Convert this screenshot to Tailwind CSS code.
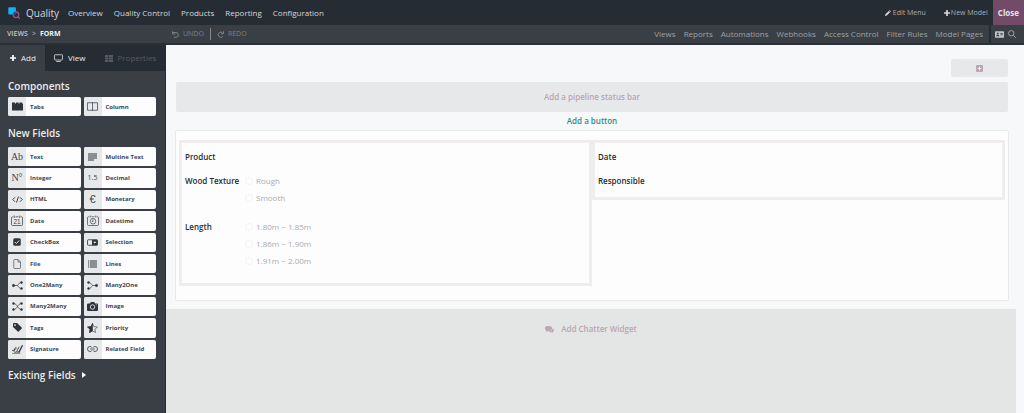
<!DOCTYPE html>
<html lang="en">
<head>
  <meta charset="UTF-8">
  <meta name="viewport" content="width=device-width, initial-scale=1.0">
  <title>Quality - Studio</title>
  <script src="https://cdn.jsdelivr.net/npm/@tailwindcss/browser@4"></script>
</head>
<body class="min-h-screen flex flex-col bg-[#f7f8fa] font-['Open_Sans','Noto_Sans',sans-serif] text-[8px] leading-3 text-[#262c33]">

  <!-- Top bar -->
  <header class="h-[25px] shrink-0 flex items-center bg-[#262c33] text-[#d5d7da]">
    <a href="#" class="flex items-center gap-[6px] pl-2 text-[10px] leading-4">
      <svg class="size-3" viewBox="0 0 12 12" fill="none">
        <rect x="0.3" y="0.2" width="7.6" height="7.4" rx="0.8" fill="#07b6f5"/>
        <circle cx="8" cy="7.8" r="2.8" stroke="#985184" stroke-width="1.3"/>
        <path d="M7.9 5v2.6H5.2A2.8 2.8 0 0 1 7.9 5z" fill="#144496"/>
        <path d="M9.8 9.6l2 2.1" stroke="#985184" stroke-width="1.4"/>
      </svg>
      Quality
    </a>
    <nav class="flex gap-[11px] pl-[9px]">
      <a href="#">Overview</a>
      <a href="#">Quality Control</a>
      <a href="#">Products</a>
      <a href="#">Reporting</a>
      <a href="#">Configuration</a>
    </nav>
    <div class="ml-auto flex items-center self-stretch text-[7px] text-[#a9adb2]">
      <button class="flex items-center gap-[2px] mr-[18px]">
        <svg class="size-[6px]" viewBox="0 0 12 12" fill="#d5d7da"><path d="M0 12l.8-3.6L7.4 1.8 10.2 4.6 3.6 11.2zM8.2 1L9.2 0 12 2.8 11 3.8z"/></svg>
        Edit Menu
      </button>
      <button class="flex items-center gap-px mr-[5px]">
        <svg class="size-[6px]" viewBox="0 0 12 12" fill="#d5d7da"><path d="M4.3 0h3.4v4.3H12v3.4H7.7V12H4.3V7.7H0V4.3h4.3z"/></svg>
        New Model
      </button>
      <button class="self-stretch px-[5px] bg-[#714b67] text-[8px] font-bold text-[#e8e1e6]">Close</button>
    </div>
  </header>

  <!-- Studio bar -->
  <div class="h-5 shrink-0 flex items-stretch border-b-2 border-[#2b3038] bg-[#3a3f46] text-[#9da1a6]">
    <div class="w-[166px] pl-[7px] flex items-center gap-1 text-[7px] font-semibold">
      <a href="#" class="text-[#c3c6c9]">VIEWS</a>
      <span>&gt;</span>
      <span class="font-bold text-[#f0f1f2]">FORM</span>
    </div>
    <div class="flex items-center pl-[6px] text-[7px] font-medium text-[#7b8085]">
      <button class="flex items-center gap-1 pr-[6px]">
        <svg class="size-[7px]" viewBox="0 0 14 14" fill="none" stroke="currentColor" stroke-width="2"><path d="M2 3h6a4.5 4.5 0 0 1 0 9.5H3.5"/><path d="M1 0.5v5.5h5.5"/></svg>
        UNDO
      </button>
      <button class="flex items-center gap-1 border-l border-[#85898e] pl-[6px]">
        <svg class="size-[7px]" viewBox="0 0 14 14" fill="none" stroke="currentColor" stroke-width="2"><path d="M11.5 4a5.2 5.2 0 1 0 .3 6.5"/><path d="M13 0.5v5H8"/></svg>
        REDO
      </button>
    </div>
    <nav class="ml-auto flex items-center gap-[8px] pr-[6px] border-r-2 border-[#262c33]">
      <a href="#">Views</a>
      <a href="#">Reports</a>
      <a href="#">Automations</a>
      <a href="#">Webhooks</a>
      <a href="#">Access Control</a>
      <a href="#">Filter Rules</a>
      <a href="#">Model Pages</a>
    </nav>
    <div class="flex items-center gap-1 pl-[4px] pr-2">
      <button aria-label="Preview">
        <svg class="w-[9px] h-[7px]" viewBox="0 0 18 14"><rect y="0.5" width="18" height="13" rx="1.5" fill="#c3c6c9"/><circle cx="5.5" cy="5" r="1.9" fill="#3a3f46"/><path d="M2.3 10.5c0-4 6.4-4 6.4 0zM10.5 4h5.3v1.5h-5.3zM10.5 7h5.3v1.5h-5.3z" fill="#3a3f46"/></svg>
      </button>
      <button aria-label="Search">
        <svg class="size-[8px]" viewBox="0 0 16 16" fill="none" stroke="#a9adb2" stroke-width="1.8"><circle cx="6.5" cy="6.5" r="5.4"/><path d="M10.5 10.5l5 5"/></svg>
      </button>
    </div>
  </div>

  <div class="flex-1 flex">
    <!-- Sidebar -->
    <aside class="w-[166px] shrink-0 border-r border-[#262c33] bg-[#3a3f46] text-[#eceded]">
      <div class="h-[26px] flex items-stretch bg-[#262c33]">
        <button class="w-[45px] flex items-center gap-[5px] pl-[10px] bg-[#3a3f46]">
          <svg class="size-[6px]" viewBox="0 0 12 12" fill="#fff"><path d="M4.3 0h3.4v4.3H12v3.4H7.7V12H4.3V7.7H0V4.3h4.3z"/></svg>
          Add
        </button>
        <button class="flex items-center gap-[5px] pl-[9px]">
          <svg class="w-[9px] h-[8px]" viewBox="0 0 18 16" fill="none" stroke="#d5d7da" stroke-width="1.7"><rect x="1" y="1.5" width="16" height="10.5" rx="1.2"/><path d="M4.5 15h9"/></svg>
          View
        </button>
        <button class="flex items-center gap-1 pl-5 text-[#565b62]" disabled>
          <svg class="w-[8px] h-[7px]" viewBox="0 0 16 14" fill="currentColor"><path d="M0 0h6v3.8H0zM7.2 0H16v3.8H7.2zM0 5h6v3.8H0zM7.2 5H16v3.8H7.2zM0 10h6v3.8H0zM7.2 10H16v3.8H7.2z"/></svg>
          Properties
        </button>
      </div>

      <div class="pl-2 pr-[9px]">
        <h2 class="pt-[7px] text-[10px] leading-4 font-semibold">Components</h2>
        <div class="mt-[3px] h-[19px] grid grid-cols-2 gap-x-[3px] text-[6px] leading-3 font-bold text-[#3f4452]">
          <button class="flex items-stretch rounded-xs overflow-hidden bg-[#fdfdfd] text-left">
            <span class="w-[18px] flex items-center justify-center bg-[#e7e8ea]">
              <svg class="w-[11px] h-[9px]" viewBox="0 0 22 18" fill="#2f343b"><path d="M0 1h6v2h2V1h5v2h2V1h5v2h2v14H0z"/></svg>
            </span>
            <span class="self-center pl-1">Tabs</span>
          </button>
          <button class="flex items-stretch rounded-xs overflow-hidden bg-[#fdfdfd] text-left">
            <span class="w-[18px] flex items-center justify-center bg-[#e7e8ea]">
              <svg class="w-[11px] h-[9px]" viewBox="0 0 22 18" fill="none" stroke="#3f4452" stroke-width="1.5"><path d="M1 1.5h20v15H1zM11 0v18"/></svg>
            </span>
            <span class="self-center pl-1">Column</span>
          </button>
        </div>

        <h2 class="pt-[9px] text-[10px] leading-4 font-semibold">New Fields</h2>
        <div class="mt-[6px] h-[212px] grid grid-cols-2 grid-rows-10 gap-x-[3px] gap-y-[2px] text-[6px] leading-3 font-bold text-[#3f4452]">
          <button class="flex items-stretch rounded-xs overflow-hidden bg-[#fdfdfd] text-left">
            <span class="w-[18px] flex items-center justify-center bg-[#e7e8ea] font-['Liberation_Serif',serif] text-[10px] font-normal">Ab</span>
            <span class="self-center pl-1">Text</span>
          </button>
          <button class="flex items-stretch rounded-xs overflow-hidden bg-[#fdfdfd] text-left">
            <span class="w-[18px] flex items-center justify-center bg-[#e7e8ea]">
              <svg class="w-[9px] h-[8px]" viewBox="0 0 18 16" fill="none" stroke="#2f343b" stroke-width="2"><path d="M0 2h18M0 6h18M0 10h18M0 14h12"/></svg>
            </span>
            <span class="self-center pl-1">Multine Text</span>
          </button>

          <button class="flex items-stretch rounded-xs overflow-hidden bg-[#fdfdfd] text-left">
            <span class="w-[18px] flex items-center justify-center bg-[#e7e8ea] font-['Liberation_Serif',serif] text-[10px] font-normal">N°</span>
            <span class="self-center pl-1">Integer</span>
          </button>
          <button class="flex items-stretch rounded-xs overflow-hidden bg-[#fdfdfd] text-left">
            <span class="w-[18px] flex items-center justify-center bg-[#e7e8ea] text-[7px] font-normal">1.5</span>
            <span class="self-center pl-1">Decimal</span>
          </button>

          <button class="flex items-stretch rounded-xs overflow-hidden bg-[#fdfdfd] text-left">
            <span class="w-[18px] flex items-center justify-center bg-[#e7e8ea]">
              <svg class="w-[11px] h-[7px]" viewBox="0 0 22 14" fill="none" stroke="#3f4452" stroke-width="2"><path d="M6 2.500L1.500 7 6 11.500M16 2.500L20.500 7 16 11.500M13 1L9 13"/></svg>
            </span>
            <span class="self-center pl-1">HTML</span>
          </button>
          <button class="flex items-stretch rounded-xs overflow-hidden bg-[#fdfdfd] text-left">
            <span class="w-[18px] flex items-center justify-center bg-[#e7e8ea] font-['Liberation_Sans',sans-serif] text-[11px] font-normal">€</span>
            <span class="self-center pl-1">Monetary</span>
          </button>

          <button class="flex items-stretch rounded-xs overflow-hidden bg-[#fdfdfd] text-left">
            <span class="w-[18px] flex items-center justify-center bg-[#e7e8ea]">
              <svg class="w-[12px] h-[11px]" viewBox="0 0 24 22" fill="none" stroke="#3f4452" stroke-width="1.5"><path d="M4.500 3.500H3q-2 0-2 2V19q0 2 2 2h18q2 0 2-2V5.500q0-2-2-2h-1.500M9 3.500h6M6.500 1v5M17.500 1v5"/><text x="12" y="17.500" text-anchor="middle" font-family="Liberation Sans, sans-serif" font-size="13" font-weight="400" fill="#3f4452" stroke="none">21</text></svg>
            </span>
            <span class="self-center pl-1">Date</span>
          </button>
          <button class="flex items-stretch rounded-xs overflow-hidden bg-[#fdfdfd] text-left">
            <span class="w-[18px] flex items-center justify-center bg-[#e7e8ea]">
              <svg class="w-[12px] h-[11px]" viewBox="0 0 24 22" fill="none" stroke="#3f4452" stroke-width="1.4"><path d="M4.500 3.500H3q-2 0-2 2V19q0 2 2 2h18q2 0 2-2V5.500q0-2-2-2h-1.500M9 3.500h6M6.500 1v4M17.500 1v4"/><circle cx="12" cy="12.500" r="5.500"/><path d="M12 9v4H9.500"/></svg>
            </span>
            <span class="self-center pl-1">Datetime</span>
          </button>

          <button class="flex items-stretch rounded-xs overflow-hidden bg-[#fdfdfd] text-left">
            <span class="w-[18px] flex items-center justify-center bg-[#e7e8ea]">
              <svg class="size-[8px]" viewBox="0 0 16 16" fill="none"><rect x="0.5" y="0.5" width="15" height="15" rx="3" fill="#2f343b"/><path d="M3.8 8l3 3 5.6-6" stroke="#e7e8ea" stroke-width="2"/></svg>
            </span>
            <span class="self-center pl-1">CheckBox</span>
          </button>
          <button class="flex items-stretch rounded-xs overflow-hidden bg-[#fdfdfd] text-left">
            <span class="w-[18px] flex items-center justify-center bg-[#e7e8ea]">
              <svg class="w-[11px] h-[7px]" viewBox="0 0 22 14" fill="none"><rect x="1" y="1.5" width="20" height="11" rx="1.5" stroke="#2f343b" stroke-width="1.6"/><path d="M10 1.5h11v11H10z" fill="#2f343b"/><path d="M12.5 5.5h6L15.500 9z" fill="#fff"/></svg>
            </span>
            <span class="self-center pl-1">Selection</span>
          </button>

          <button class="flex items-stretch rounded-xs overflow-hidden bg-[#fdfdfd] text-left">
            <span class="w-[18px] flex items-center justify-center bg-[#e7e8ea]">
              <svg class="w-[8px] h-[10px]" viewBox="0 0 16 20" fill="none" stroke="#3f4452" stroke-width="1.3"><path d="M3 1h7l5 5v11.5a1.5 1.5 0 0 1-1.5 1.5H3a1.5 1.5 0 0 1-1.5-1.5V2.5A1.5 1.5 0 0 1 3 1zM10 1v5h5"/></svg>
            </span>
            <span class="self-center pl-1">File</span>
          </button>
          <button class="flex items-stretch rounded-xs overflow-hidden bg-[#fdfdfd] text-left">
            <span class="w-[18px] flex items-center justify-center bg-[#e7e8ea]">
              <svg class="w-[9px] h-[8px]" viewBox="0 0 18 16" fill="none" stroke="#2f343b" stroke-width="2"><path d="M0 2h2.500M4 2h14M0 6h2.500M4 6h14M0 10h2.500M4 10h14M0 14h2.500M4 14h14"/></svg>
            </span>
            <span class="self-center pl-1">Lines</span>
          </button>

          <button class="flex items-stretch rounded-xs overflow-hidden bg-[#fdfdfd] text-left">
            <span class="w-[18px] flex items-center justify-center bg-[#e7e8ea]">
              <svg class="w-[11px] h-[9px]" viewBox="0 0 22 18" fill="#2f343b" stroke="#2f343b"><path d="M2.5 9h8M19 3c-4 0-5 2-8 6 3 4 4 6 8 6" fill="none" stroke-width="1.4"/><circle cx="3" cy="9" r="2.400"/><circle cx="19" cy="3" r="2"/><circle cx="19" cy="15" r="2"/></svg>
            </span>
            <span class="self-center pl-1">One2Many</span>
          </button>
          <button class="flex items-stretch rounded-xs overflow-hidden bg-[#fdfdfd] text-left">
            <span class="w-[18px] flex items-center justify-center bg-[#e7e8ea]">
              <svg class="w-[11px] h-[9px]" viewBox="0 0 22 18" fill="#2f343b" stroke="#2f343b"><path d="M19.5 9h-8M3 3c4 0 5 2 8 6-3 4-4 6-8 6" fill="none" stroke-width="1.4"/><circle cx="19" cy="9" r="2.400"/><circle cx="3" cy="3" r="2"/><circle cx="3" cy="15" r="2"/></svg>
            </span>
            <span class="self-center pl-1">Many2One</span>
          </button>

          <button class="flex items-stretch rounded-xs overflow-hidden bg-[#fdfdfd] text-left">
            <span class="w-[18px] flex items-center justify-center bg-[#e7e8ea]">
              <svg class="w-[11px] h-[9px]" viewBox="0 0 22 18" fill="#2f343b" stroke="#2f343b"><path d="M3 3c4 0 5 2 8 6-3 4-4 6-8 6M19 3c-4 0-5 2-8 6 3 4 4 6 8 6" fill="none" stroke-width="1.4"/><circle cx="3" cy="3" r="2"/><circle cx="3" cy="15" r="2"/><circle cx="19" cy="3" r="2"/><circle cx="19" cy="15" r="2"/></svg>
            </span>
            <span class="self-center pl-1">Many2Many</span>
          </button>
          <button class="flex items-stretch rounded-xs overflow-hidden bg-[#fdfdfd] text-left">
            <span class="w-[18px] flex items-center justify-center bg-[#e7e8ea]">
              <svg class="w-[11px] h-[9px]" viewBox="0 0 22 18" fill="#2f343b"><path d="M2 3h4l1.5-3h7L16 3h4q2 0 2 2v11q0 2-2 2H2q-2 0-2-2V5q0-2 2-2z"/><circle cx="11" cy="10" r="4.5" fill="none" stroke="#e7e8ea" stroke-width="1.7"/><path d="M17.5 5h2v1.5h-2z" fill="#e7e8ea"/></svg>
            </span>
            <span class="self-center pl-1">Image</span>
          </button>

          <button class="flex items-stretch rounded-xs overflow-hidden bg-[#fdfdfd] text-left">
            <span class="w-[18px] flex items-center justify-center bg-[#e7e8ea]">
              <svg class="size-[9px]" viewBox="0 0 18 18" fill="#2f343b"><path fill-rule="evenodd" d="M0 1.5Q0 0 1.5 0H8l9.5 9q.8 1 0 2l-6 6.2q-1 .8-2 0L0 8zM4 2.4a1.6 1.6 0 1 0 .01 0z"/></svg>
            </span>
            <span class="self-center pl-1">Tags</span>
          </button>
          <button class="flex items-stretch rounded-xs overflow-hidden bg-[#fdfdfd] text-left">
            <span class="w-[18px] flex items-center justify-center bg-[#e7e8ea]">
              <svg class="w-[11px] h-[10px]" viewBox="0 0 22 20" fill="none" stroke="#2f343b" stroke-width="1.2"><path d="M11 1l2.8 6.2 7 .9-5 4.4 1.2 6.5L11 15.8l-6 3.2 1.2-6.5-5-4.4 7-.9z"/><path d="M11 1v14.8l-6 3.2 1.2-6.5-5-4.4 7-.9z" fill="#2f343b"/></svg>
            </span>
            <span class="self-center pl-1">Priority</span>
          </button>

          <button class="flex items-stretch rounded-xs overflow-hidden bg-[#fdfdfd] text-left">
            <span class="w-[18px] flex items-center justify-center bg-[#e7e8ea]">
              <svg class="w-[11px] h-[9px]" viewBox="0 0 22 18" fill="none" stroke="#2f343b" stroke-width="1.6" stroke-linecap="round" stroke-linejoin="round"><path d="M1 11c4 0 8-3 7.500-5.500S4 8 4 13q0 3.500 5 1"/><path d="M14 4l-4 8q-1.500 4.500 3 2"/><path d="M20.500 1.500L14 14.500" stroke-width="2.600"/><path d="M1 17h15" stroke-width="1"/></svg>
            </span>
            <span class="self-center pl-1">Signature</span>
          </button>
          <button class="flex items-stretch rounded-xs overflow-hidden bg-[#fdfdfd] text-left">
            <span class="w-[18px] flex items-center justify-center bg-[#e7e8ea]">
              <svg class="w-[11px] h-[6px]" viewBox="0 0 22 12" fill="none" stroke="#3f4452" stroke-width="1.7"><path d="M9.500 9.500A5 5 0 0 1 6 11a5 5 0 0 1 0-10c2 0 3.500 1 4.300 2.500M12.500 2.500A5 5 0 0 1 16 1a5 5 0 0 1 0 10c-2 0-3.500-1-4.300-2.500M6.500 6h9"/></svg>
            </span>
            <span class="self-center pl-1">Related Field</span>
          </button>
        </div>

        <button class="mt-2 flex items-center gap-[6px] text-[10px] leading-4 font-semibold">
          Existing Fields
          <svg class="w-[4px] h-[6px]" viewBox="0 0 4 6" fill="#fff"><path d="M0 0l4 3-4 3z"/></svg>
        </button>
      </div>
    </aside>

    <!-- Form editor -->
    <main class="flex-1 flex flex-col">
      <div class="pl-[9px] pr-[15px] pt-[14px]">
        <div class="flex justify-end pr-px">
          <button class="w-[57px] h-[18px] flex items-center justify-center rounded-xs bg-[#e7e8ea]" aria-label="Add a smart button">
            <svg class="size-[7px]" viewBox="0 0 14 14"><rect width="14" height="14" rx="2.5" fill="#b9a5b3"/><path d="M7 3v8M3 7h8" stroke="#f0ecef" stroke-width="2"/></svg>
          </button>
        </div>
        <div class="mt-[5px] px-px">
          <button class="w-full h-[30px] rounded-xs bg-[#e7e8ea] font-semibold text-[#b9a5b3]">Add a pipeline status bar</button>
        </div>
        <button class="w-full h-[18px] block font-semibold text-[#1f8d92]">Add a button</button>

        <!-- Sheet -->
        <div class="h-[171px] px-[3px] pt-[9px] flex items-start rounded-xs border border-[#e7e8ea] bg-[#fdfdfd]">
          <section class="flex-1 h-[146px] pl-[3px] pt-[8px] border-3 border-[#efedee]">
            <h3 class="font-semibold">Product</h3>
            <fieldset class="mt-[9px] flex text-[#a9abaf]">
              <legend class="float-left w-[60px] pt-[3px] font-semibold text-[#262c33]">Wood Texture</legend>
              <div>
                <label class="h-[17px] flex items-center gap-[3px]"><input type="radio" name="texture" class="appearance-none size-2 rounded-full border border-[#f4f4f5]">Rough</label>
                <label class="h-[17px] flex items-center gap-[3px]"><input type="radio" name="texture" class="appearance-none size-2 rounded-full border border-[#f4f4f5]">Smooth</label>
              </div>
            </fieldset>
            <fieldset class="mt-3 flex text-[#a9abaf]">
              <legend class="float-left w-[60px] pt-[3px] font-semibold text-[#262c33]">Length</legend>
              <div>
                <label class="h-[17px] flex items-center gap-[3px]"><input type="radio" name="length" class="appearance-none size-2 rounded-full border border-[#f4f4f5]">1.80m ~ 1.85m</label>
                <label class="h-[17px] flex items-center gap-[3px]"><input type="radio" name="length" class="appearance-none size-2 rounded-full border border-[#f4f4f5]">1.86m ~ 1.90m</label>
                <label class="h-[17px] flex items-center gap-[3px]"><input type="radio" name="length" class="appearance-none size-2 rounded-full border border-[#f4f4f5]">1.91m ~ 2.00m</label>
              </div>
            </fieldset>
          </section>
          <section class="flex-1 h-[60px] pl-[3px] pt-[8px] border-3 border-[#efedee]">
            <h3 class="font-semibold">Date</h3>
            <h3 class="mt-3 font-semibold">Responsible</h3>
          </section>
        </div>
      </div>

      <!-- Chatter -->
      <div class="flex-1 mt-2 mr-[8px] pt-[14px] flex items-start justify-center bg-[#e4e6e5]">
        <button class="flex items-center gap-[7px] font-semibold text-[#b9a5b3]">
          <svg class="w-[9px] h-[7px]" viewBox="0 0 18 14" fill="currentColor"><ellipse cx="7" cy="5" rx="7" ry="4.8"/><path d="M2 12l1.5-4 4 1.5z"/><path d="M15.5 4.5C15.5 9 11 11 6.5 10.8c1.5 1.4 4 2 6.5 1.5l3.5 1.2-.5-2.5c3-2 2.5-5-.5-6.5z"/></svg>
          Add Chatter Widget
        </button>
      </div>
    </main>
  </div>
</body>
</html>
